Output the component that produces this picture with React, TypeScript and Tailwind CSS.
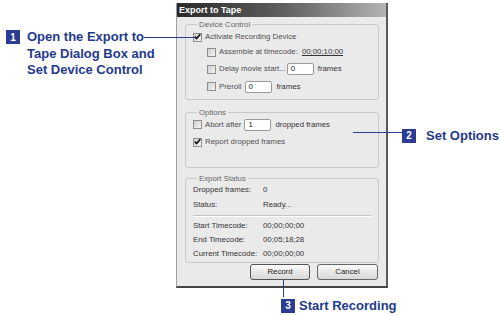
import React from "react";

const dlgFont = { fontFamily: '"Liberation Sans", Arial, sans-serif' };

function Check({ checked = false }: { checked?: boolean }) {
  return (
    <span className="inline-flex w-[9px] h-[9px] shrink-0 items-center justify-center border border-[#8e8e8e] bg-gradient-to-br from-[#d0d0d0] to-[#f6f6f6]">
      {checked && (
        <svg width="8" height="8" viewBox="0 0 8 8">
          <path d="M1 3.6 L3 5.8 L7.2 0.8" stroke="#111" strokeWidth="1.9" fill="none" />
        </svg>
      )}
    </span>
  );
}

function Field({ value, w = "w-[27px]" }: { value: string; w?: string }) {
  return (
    <span className={`inline-flex ${w} h-[12px] items-center bg-white border border-[#9a9a9a] rounded-[2px] pl-[3px] text-[#222]`}>
      {value}
    </span>
  );
}

function Group({ title, children, className = "" }: { title: string; children: React.ReactNode; className?: string }) {
  return (
    <fieldset className={`border border-[#c9c9c9] rounded-[3px] px-[7px] ${className}`}>
      <legend className="ml-[4px] px-[2px] leading-[9px] text-[#666]">{title}</legend>
      {children}
    </fieldset>
  );
}

function Dialog() {
  return (
    <div
      className="w-[212px] h-[285px] flex flex-col bg-[#eaeaea] border-l border-[#a0a0a0] border-r-2 border-r-[#5a5a5a] border-b-2 border-b-[#444] text-[7.8px] text-[#505050]"
      style={dlgFont}
    >
      <div className="h-[14px] shrink-0 bg-gradient-to-r from-[#2a2a2a] via-[#5e5e5e] to-[#b4b4b4] pl-[2px] text-[9px] font-bold leading-[14px] text-white">
        Export to Tape
      </div>
      <div className="flex flex-1 flex-col pl-[8px] pr-[7px] pt-[3px]">
        <Group title="Device Control" className="pb-[4px]">
          <div className="h-[15px] flex items-center gap-[3px] pt-[1px]">
            <Check checked />
            <span>Activate Recording Device</span>
          </div>
          <div className="h-[16px] flex items-center gap-[3px] pl-[14px]">
            <Check />
            <span>Assemble at timecode:</span>
            <span className="ml-[1px] underline text-[#333]">00;00;10;00</span>
          </div>
          <div className="h-[18px] flex items-center gap-[3px] pl-[14px]">
            <Check />
            <span className="mr-[-2px]">Delay movie start...</span>
            <Field value="0" />
            <span className="ml-[1px] text-[#333]">frames</span>
          </div>
          <div className="h-[17px] flex items-center gap-[3px] pl-[14px]">
            <Check />
            <span>Preroll</span>
            <Field value="0" />
            <span className="ml-[2px] text-[#333]">frames</span>
          </div>
        </Group>

        <Group title="Options" className="mt-[8px] pb-[15px]">
          <div className="h-[15px] flex items-center gap-[3px]">
            <Check />
            <span>Abort after</span>
            <Field value="1" />
            <span className="ml-[1px] text-[#333]">dropped frames</span>
          </div>
          <div className="h-[20px] flex items-center gap-[3px]">
            <Check checked />
            <span>Report dropped frames</span>
          </div>
        </Group>

        <Group title="Export Status" className="mt-[6px] pb-[1px] text-[#333]">
          <div className="h-[14px] flex items-center">
            <span className="w-[70px]">Dropped frames:</span>
            <span>0</span>
          </div>
          <div className="h-[16px] flex items-center">
            <span className="w-[70px]">Status:</span>
            <span>Ready...</span>
          </div>
          <div className="mt-[2px] mb-[2px] h-[2px] border-t border-[#c4c4c4] border-b border-b-white" />
          <div className="h-[14px] flex items-center">
            <span className="w-[70px]">Start Timecode:</span>
            <span>00;00;00;00</span>
          </div>
          <div className="h-[14px] flex items-center">
            <span className="w-[70px]">End Timecode:</span>
            <span>00;05;18;28</span>
          </div>
          <div className="h-[14px] flex items-center">
            <span className="w-[70px]">Current Timecode:</span>
            <span>00;00;00;00</span>
          </div>
        </Group>

        <div className="mt-[1px] flex justify-end gap-[7px] pr-[1px]">
          <button className="w-[60px] h-[16px] rounded-[3px] border border-[#555] bg-gradient-to-b from-[#fafafa] to-[#d8d8d8] text-[#222] text-[7.8px]">
            Record
          </button>
          <button className="w-[61px] h-[16px] rounded-[3px] border border-[#666] bg-gradient-to-b from-[#fafafa] to-[#d8d8d8] text-[#222] text-[7.8px]">
            Cancel
          </button>
        </div>
      </div>
    </div>
  );
}

function Badge({ n }: { n: string }) {
  return (
    <span className="inline-flex w-[14px] h-[14px] shrink-0 items-center justify-center bg-[#2b3c92] text-[10px] font-bold text-white">
      {n}
    </span>
  );
}

export default function App() {
  const callFont = { fontFamily: '"Liberation Sans", Arial, sans-serif' };
  return (
    <div className="relative w-[500px] h-[315px] overflow-hidden bg-white">
      <div className="ml-[176px] pt-[3px]">
        <Dialog />
      </div>

      {/* Callout 1 */}
      <div className="absolute left-[6px] top-[30px] flex gap-[7px]" style={callFont}>
        <Badge n="1" />
        <div className="text-[13px] font-bold leading-[16.5px] text-[#233a8c] -mt-[1px]">
          <div>Open the Export to</div>
          <div>Tape Dialog Box and</div>
          <div>Set Device Control</div>
        </div>
      </div>
      <div className="absolute left-[144px] top-[37px] w-[51px] h-[1px] bg-[#2b3c92]" />

      {/* Callout 2 */}
      <div className="absolute left-[353px] top-[132px] w-[49px] h-[1px] bg-[#2b3c92]" />
      <div className="absolute left-[402px] top-[126px] flex items-center gap-[10px]" style={callFont}>
        <Badge n="2" />
        <span className="text-[13px] font-bold text-[#233a8c]">Set Options</span>
      </div>

      {/* Callout 3 */}
      <div className="absolute left-[283px] top-[280px] w-[1px] h-[17px] bg-[#2b3c92]" />
      <div className="absolute left-[281px] top-[296px] flex items-center gap-[4px]" style={callFont}>
        <Badge n="3" />
        <span className="text-[13px] font-bold text-[#233a8c]">Start Recording</span>
      </div>
    </div>
  );
}
